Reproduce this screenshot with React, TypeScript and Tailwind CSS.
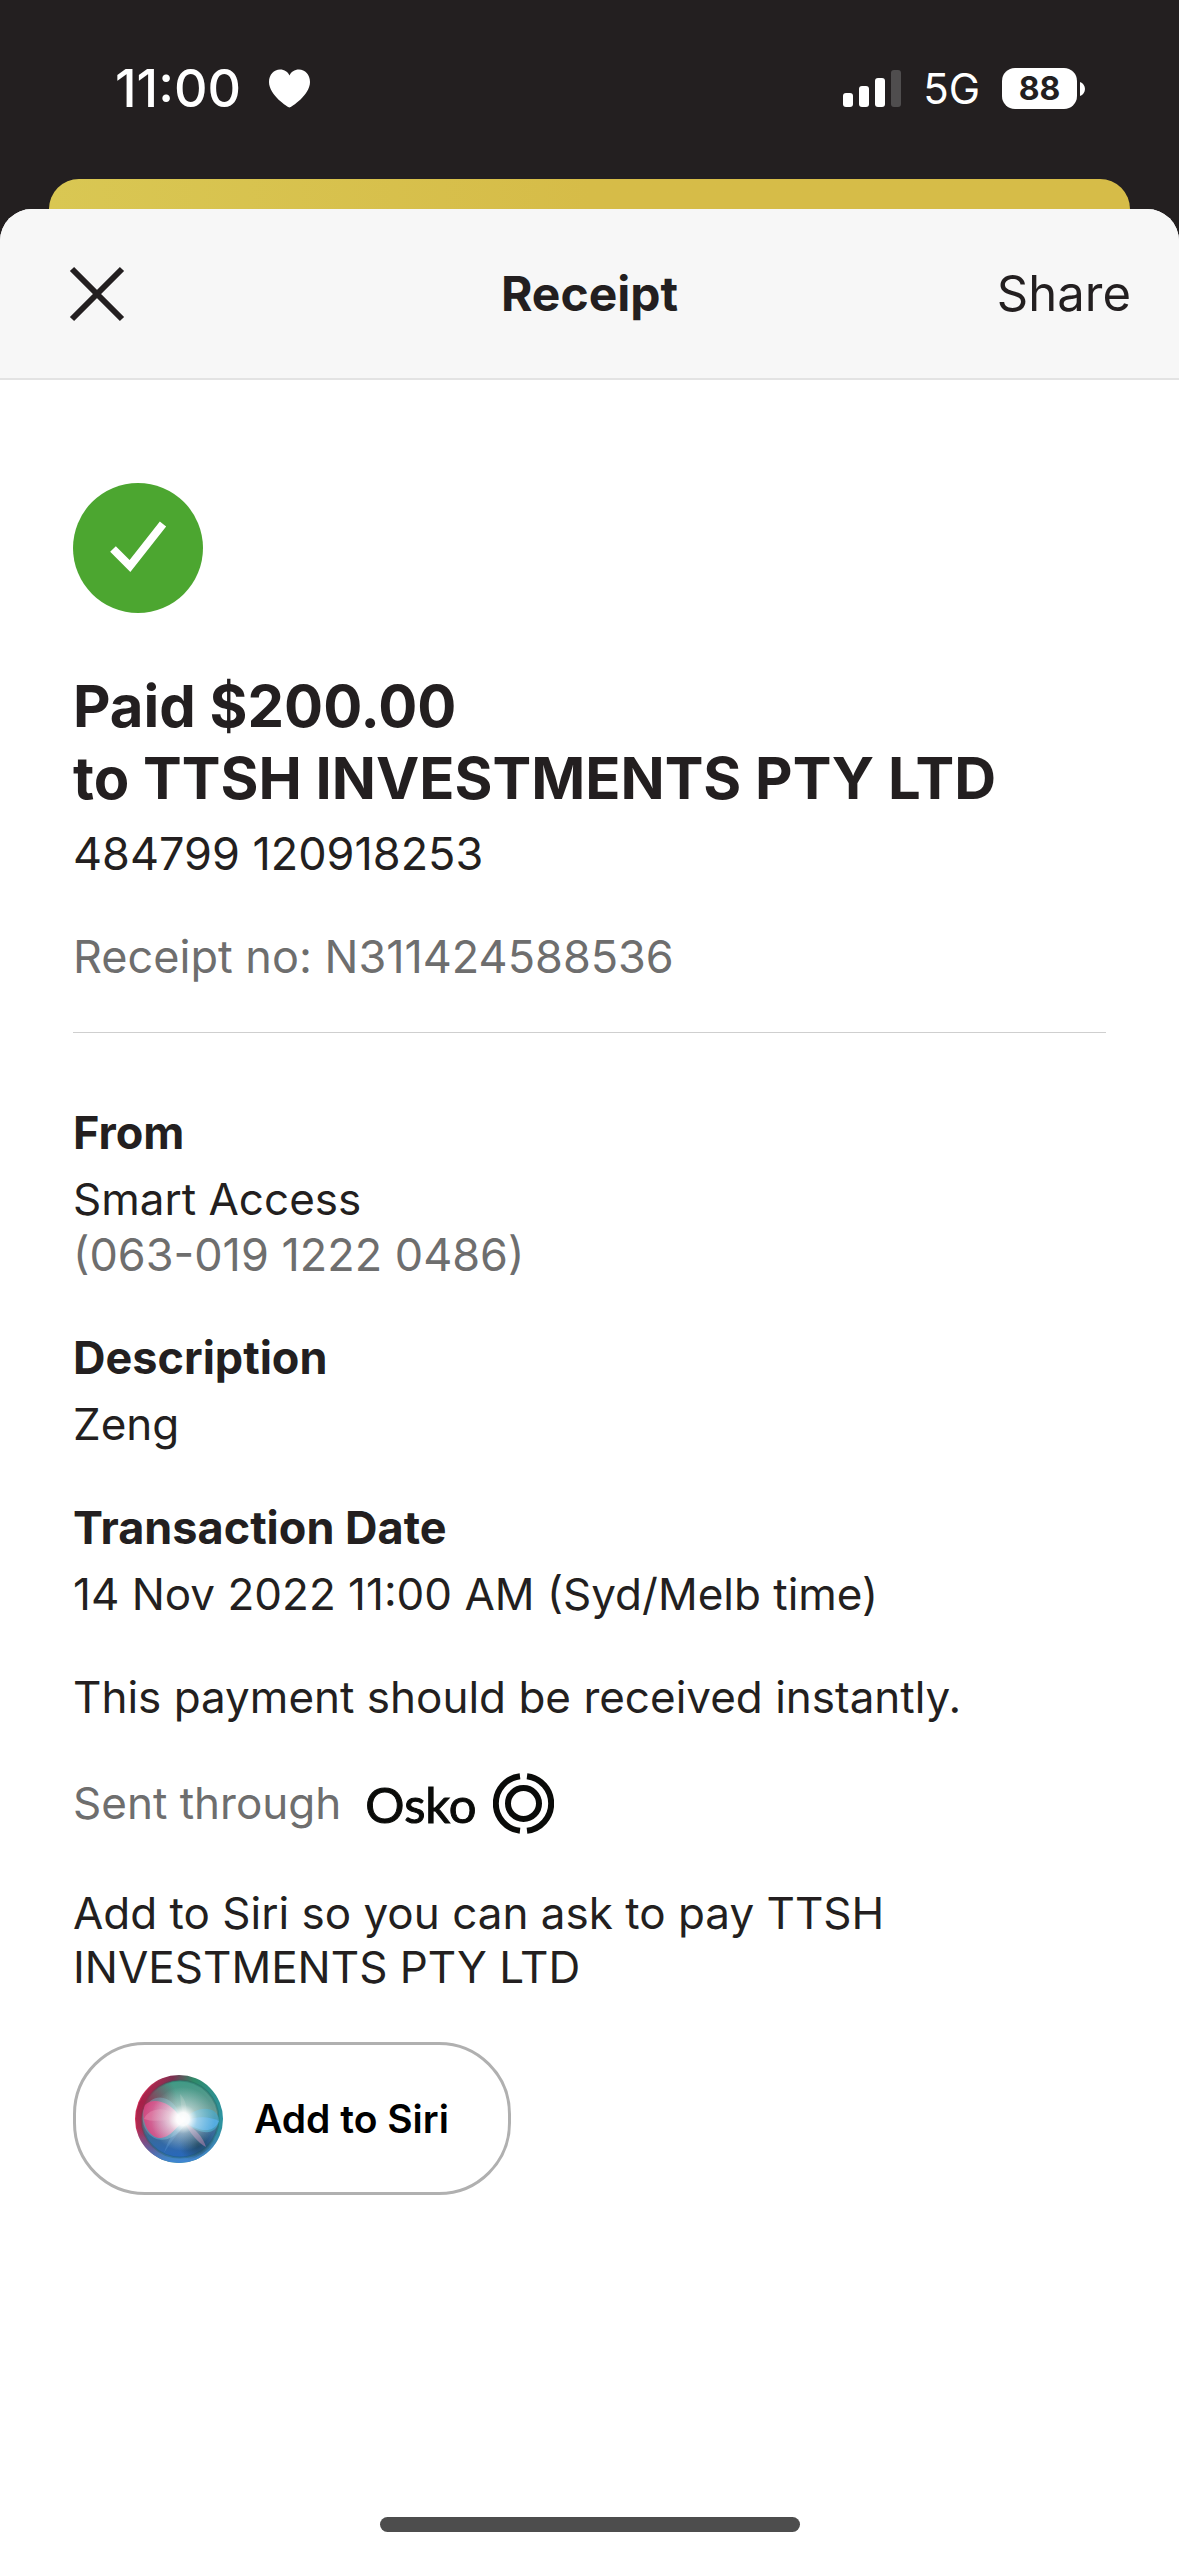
import { HTMLAttributes } from 'react';

type Detail = {
  label: string;
  value: string;
  note?: string;
};

const details: Detail[] = [
  { label: 'From', value: 'Smart Access', note: '(063-019 1222 0486)' },
  { label: 'Description', value: 'Zeng' },
  { label: 'Transaction Date', value: '14 Nov 2022 11:00 AM (Syd/Melb time)' },
];

function HeartIcon() {
  return (
    <svg width="41" height="39" viewBox="0 0 41 39" fill="#fff" aria-hidden="true">
      <path d="M20.500 38.500 C19 38.500 0 26 0 13 C0 5.500 5 0.500 11 0.500 C15.500 0.500 19 3 20.500 6.500 C22 3 25.500 0.500 30 0.500 C36 0.500 41 5.500 41 13 C41 26 22 38.500 20.500 38.500 Z" />
    </svg>
  );
}

function SignalIcon() {
  return (
    <svg width="58" height="38" viewBox="0 0 58 38" fill="#fff" aria-hidden="true">
      <rect x="0" y="23" width="10" height="14" rx="3" />
      <rect x="16" y="16" width="10" height="21" rx="3" />
      <rect x="32" y="8" width="10" height="29" rx="3" />
      <rect x="48" y="0" width="10" height="37" rx="3" fill="#4f4d4e" />
    </svg>
  );
}

function StatusBar() {
  return (
    <div className="flex h-[179px] items-center justify-between pr-[94px] pb-[2px] pl-[115px] text-white">
      <div className="flex items-center gap-7">
        <span className="text-[52px] leading-[60px] font-medium">11:00</span>
        <HeartIcon />
      </div>
      <div className="flex items-center">
        <SignalIcon />
        <span className="ml-[22px] text-[42px] leading-[50px]">5G</span>
        <div className="ml-[22px] flex h-[41px] w-[75px] items-center justify-center rounded-[13px] bg-white text-[32px] leading-[40px] font-bold text-[#231f20]">
          88
        </div>
        <svg className="ml-[3px]" width="5" height="14" viewBox="0 0 5 14" fill="#fff" aria-hidden="true">
          <path d="M0 0 C3 1 5 4 5 7 C5 10 3 13 0 14 Z" />
        </svg>
      </div>
    </div>
  );
}

function OskoMark() {
  return (
    <svg width="61" height="61" viewBox="0 0 61 61" fill="none" stroke="#0a0b09" strokeWidth="6" aria-hidden="true">
      <circle cx="30.500" cy="30.500" r="15.500" />
      <path d="M27 3.200 A27.500 27.500 0 0 0 27 57.800" />
      <path d="M34 3.200 A27.500 27.500 0 0 1 34 57.800" />
    </svg>
  );
}

function SiriOrb() {
  return (
    <svg width="88" height="88" viewBox="0 0 88 88" aria-hidden="true">
      <defs>
        <linearGradient id="rim" x1="0.050" y1="0.350" x2="0.950" y2="0.600">
          <stop offset="0" stopColor="#cf2c55" />
          <stop offset="0.300" stopColor="#7a3050" />
          <stop offset="0.550" stopColor="#2f8a68" />
          <stop offset="1" stopColor="#2d93a0" />
        </linearGradient>
        <linearGradient id="rimBlue" x1="0" y1="0" x2="0" y2="1">
          <stop offset="0.600" stopColor="#5a72c8" stopOpacity="0" />
          <stop offset="1" stopColor="#3f86d6" />
        </linearGradient>
        <linearGradient id="core" x1="0.450" y1="0" x2="0.500" y2="1">
          <stop offset="0" stopColor="#3f9a84" />
          <stop offset="0.450" stopColor="#6a9a96" />
          <stop offset="0.700" stopColor="#3a6a98" />
          <stop offset="1" stopColor="#2768bd" />
        </linearGradient>
        <radialGradient id="redSide" cx="0.060" cy="0.300" r="0.420">
          <stop offset="0" stopColor="#a81f48" />
          <stop offset="1" stopColor="#7a2848" stopOpacity="0" />
        </radialGradient>
        <radialGradient id="pink" cx="0.900" cy="0.450" r="0.900">
          <stop offset="0" stopColor="#f9dbe6" />
          <stop offset="0.500" stopColor="#dc7fac" />
          <stop offset="1" stopColor="#d8457f" />
        </radialGradient>
        <radialGradient id="dark" cx="0.720" cy="0.800" r="0.220">
          <stop offset="0" stopColor="#1d4358" stopOpacity="0.850" />
          <stop offset="1" stopColor="#1d4358" stopOpacity="0" />
        </radialGradient>
        <radialGradient id="glow">
          <stop offset="0" stopColor="#fff" />
          <stop offset="0.200" stopColor="#fff" stopOpacity="0.950" />
          <stop offset="0.450" stopColor="#f2fbfa" stopOpacity="0.450" />
          <stop offset="1" stopColor="#d5f0ee" stopOpacity="0" />
        </radialGradient>
      </defs>
      <circle cx="44" cy="44" r="44" fill="url(#rim)" />
      <circle cx="44" cy="44" r="44" fill="url(#rimBlue)" />
      <circle cx="45" cy="44" r="38.500" fill="url(#core)" stroke="#1f5f5c" strokeOpacity="0.350" strokeWidth="2" />
      <circle cx="44" cy="44" r="43" fill="url(#redSide)" />
      <circle cx="44" cy="44" r="42" fill="url(#dark)" />
      <path d="M47 45 C40 20 18 14 8 36 C4 62 30 78 50 50 Z" fill="#7dbdd4" fillOpacity="0.400" />
      <path d="M47 45 C36 26 18 22 10 30 C5 42 12 62 24 63 C36 63 40 52 50 46 Z" fill="url(#pink)" fillOpacity="0.920" />
      <path d="M47 45 C34 30 14 32 9 44 C20 48 34 44 47 45 Z" fill="#eea0bd" fillOpacity="0.350" />
      <path d="M48 46 C60 30 82 30 84 45 C82 62 64 60 48 46 Z" fill="#48a9cc" fillOpacity="0.700" />
      <path d="M48 46 C60 42 72 40 84 46 C78 60 62 56 48 46 Z" fill="#5ab4f2" fillOpacity="0.650" />
      <path d="M50 48 C60 53 68 62 71 72 C63 68 55 58 50 48 Z" fill="#c98bb6" fillOpacity="0.500" />
      <path d="M45 48 C38 57 32 68 29 78 C35 68 43 58 50 50 Z" fill="#6fb0e6" fillOpacity="0.250" />
      <path d="M50 42 C54 34 50 24 45 19 C46 28 46 36 50 42 Z" fill="#b5c9bf" fillOpacity="0.300" />
      <circle cx="48" cy="44" r="32" fill="url(#glow)" />
    </svg>
  );
}

function Divider({ className = '' }: HTMLAttributes<HTMLHRElement>) {
  return <hr className={`border-t border-[#cfcfcf] ${className}`} />;
}

export default function App() {
  return (
    <div className="flex min-h-screen flex-col bg-[#231f20] font-['Inter','Liberation_Sans',sans-serif] text-[#231f20]">
      <StatusBar />

      {/* Card peeking out behind the sheet */}
      <div className="mx-[49px] h-[30px] rounded-t-[30px] bg-linear-to-r from-[#d9c753] via-[#d6bc48] to-[#d6bc48]" />

      <main className="flex flex-1 flex-col overflow-hidden rounded-t-[32px] bg-white">
        <header className="grid h-[171px] grid-cols-3 items-center border-b-2 border-[#e3e3e3] bg-[#f7f7f7] px-12">
          <button type="button" aria-label="Close" className="justify-self-start px-5">
            <svg width="58" height="58" viewBox="0 0 58 58" stroke="#231f20" strokeWidth="6" aria-hidden="true">
              <path d="M4 4 L54 54 M54 4 L4 54" />
            </svg>
          </button>
          <h1 className="justify-self-center text-[48px] leading-[60px] font-bold">Receipt</h1>
          <button type="button" className="justify-self-end text-[49px] leading-[60px]">
            Share
          </button>
        </header>

        <div className="px-[73px] pt-[103px] text-[44px] leading-[55px]">
          <svg width="130" height="130" viewBox="0 0 130 130" aria-label="Success">
            <circle cx="65" cy="65" r="65" fill="#4ca630" />
            <path d="M40 66 L57 83 L90 41" fill="none" stroke="#fff" strokeWidth="8" />
          </svg>

          <h2 className="mt-[57px] text-[58px] leading-[72px] font-bold">
            Paid $200.00
            <br />
            to TTSH INVESTMENTS PTY LTD
          </h2>
          <p className="mt-3 text-[45px]">484799 120918253</p>
          <p className="mt-12 text-[45px] text-[#6e6e6e]">Receipt no: N311424588536</p>

          <Divider className="mt-12" />

          <dl className="mt-18 flex flex-col gap-12">
            {details.map((item) => (
              <div key={item.label}>
                <dt className="text-[45px] font-bold">{item.label}</dt>
                <dd className="mt-3">{item.value}</dd>
                {item.note && <dd className="text-[45px] text-[#6e6e6e]">{item.note}</dd>}
              </div>
            ))}
          </dl>

          <p className="mt-12">This payment should be received instantly.</p>

          <div className="mt-12 flex items-center">
            <span className="text-[#6e6e6e]">Sent through</span>
            <span className="mr-4 ml-6 font-['Lato','Inter',sans-serif] text-[49px] leading-[60px] text-[#0a0b09] [-webkit-text-stroke:1px_#0a0b09]">
              Osko
            </span>
            <OskoMark />
          </div>

          <p className="mt-[52px] max-w-[880px] leading-[54px]">Add to Siri so you can ask to pay TTSH INVESTMENTS PTY LTD</p>

          <button
            type="button"
            className="mt-12 flex h-[153px] items-center gap-[31px] rounded-[72px] border-3 border-[#b0b0b0] px-[59px] text-[39px] leading-[48px] font-semibold text-black"
          >
            <SiriOrb />
            Add to Siri
          </button>
        </div>

        {/* Home indicator */}
        <div className="mx-auto mt-auto mb-6 h-[15px] w-[420px] rounded-full bg-[#4d4d4d]" />
      </main>
    </div>
  );
}
